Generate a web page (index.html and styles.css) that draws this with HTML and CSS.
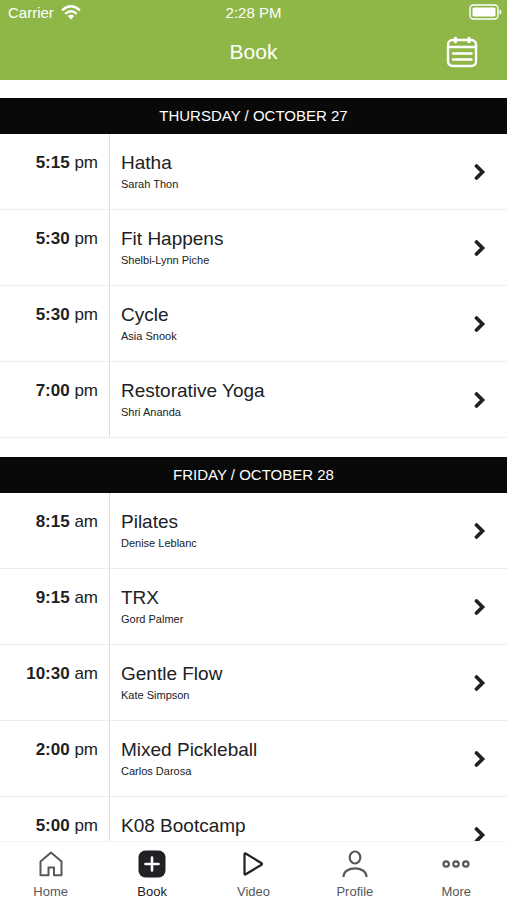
FILE: index.html
```
<!DOCTYPE html>
<html lang="en">
<head>
<meta charset="utf-8">
<meta name="viewport" content="width=device-width, initial-scale=1">
<title>Book</title>
<link rel="stylesheet" href="styles.css">
</head>
<body>
<svg class="sprite" aria-hidden="true">
  <symbol id="chevron" viewBox="0 0 12 18"><path d="M2.5 3 L8.5 9 L2.5 15" fill="none" stroke="currentColor" stroke-width="3.7" stroke-linecap="round" stroke-linejoin="miter"/></symbol>
</svg>
<header class="header">
  <div class="status">
    <div class="carrier"><span>Carrier</span>
      <svg class="wifi" viewBox="0 0 20 15" aria-hidden="true"><g fill="none" stroke="currentColor" stroke-width="2.3"><path d="M1 5.3 Q10 -2.7 19 5.3"/><path d="M4.2 8.9 Q10 3.5 15.8 8.9"/></g><path d="M6.7 11.1 Q10 8.6 13.3 11.1 L10 14.6 Z" fill="currentColor"/></svg>
    </div>
    <span>2:28 PM</span>
    <svg class="battery" viewBox="0 0 34 16" aria-hidden="true"><rect x="1" y="1" width="28" height="14" rx="3.5" fill="none" stroke="currentColor" stroke-width="1.4"/><rect x="3.500" y="3.500" width="23" height="9" rx="1.200" fill="currentColor"/><path d="M30.5 5.5 Q32.6 6.3 32.6 8 Q32.6 9.7 30.5 10.5 Z" fill="currentColor"/></svg>
  </div>
  <div class="navbar">
    <h1 class="title">Book</h1>
    <button class="calendar" type="button" aria-label="Calendar">
      <svg viewBox="0 0 32 32" aria-hidden="true"><g fill="none" stroke="currentColor" stroke-width="2.4" stroke-linecap="round"><rect x="2" y="4" width="28" height="26" rx="4.5"/><path d="M2 11 H30 M7 17.5 H25.500 M7 23.500 H25.500"/><path d="M9.500 2.500 V5.500 M23 2.500 V5.500" stroke-width="3.400"/></g></svg>
    </button>
  </div>
</header>
<main class="schedule">
  <section class="day">
    <h2 class="day-title">THURSDAY / OCTOBER 27</h2>
    <ul class="classes">
      <li><a class="class" href="#hatha"><span class="time"><b>5:15</b> pm</span><span class="info"><span class="name">Hatha</span><span class="teacher">Sarah Thon</span></span><svg class="chevron" aria-hidden="true"><use href="#chevron"/></svg></a></li>
      <li><a class="class" href="#fit"><span class="time"><b>5:30</b> pm</span><span class="info"><span class="name">Fit Happens</span><span class="teacher">Shelbi-Lynn Piche</span></span><svg class="chevron" aria-hidden="true"><use href="#chevron"/></svg></a></li>
      <li><a class="class" href="#cycle"><span class="time"><b>5:30</b> pm</span><span class="info"><span class="name">Cycle</span><span class="teacher">Asia Snook</span></span><svg class="chevron" aria-hidden="true"><use href="#chevron"/></svg></a></li>
      <li><a class="class" href="#yoga"><span class="time"><b>7:00</b> pm</span><span class="info"><span class="name">Restorative Yoga</span><span class="teacher">Shri Ananda</span></span><svg class="chevron" aria-hidden="true"><use href="#chevron"/></svg></a></li>
    </ul>
  </section>
  <section class="day">
    <h2 class="day-title">FRIDAY / OCTOBER 28</h2>
    <ul class="classes">
      <li><a class="class" href="#pilates"><span class="time"><b>8:15</b> am</span><span class="info"><span class="name">Pilates</span><span class="teacher">Denise Leblanc</span></span><svg class="chevron" aria-hidden="true"><use href="#chevron"/></svg></a></li>
      <li><a class="class" href="#trx"><span class="time"><b>9:15</b> am</span><span class="info"><span class="name">TRX</span><span class="teacher">Gord Palmer</span></span><svg class="chevron" aria-hidden="true"><use href="#chevron"/></svg></a></li>
      <li><a class="class" href="#flow"><span class="time"><b>10:30</b> am</span><span class="info"><span class="name">Gentle Flow</span><span class="teacher">Kate Simpson</span></span><svg class="chevron" aria-hidden="true"><use href="#chevron"/></svg></a></li>
      <li><a class="class" href="#pickleball"><span class="time"><b>2:00</b> pm</span><span class="info"><span class="name">Mixed Pickleball</span><span class="teacher">Carlos Darosa</span></span><svg class="chevron" aria-hidden="true"><use href="#chevron"/></svg></a></li>
      <li><a class="class" href="#bootcamp"><span class="time"><b>5:00</b> pm</span><span class="info"><span class="name">K08 Bootcamp</span></span><svg class="chevron" aria-hidden="true"><use href="#chevron"/></svg></a></li>
    </ul>
  </section>
</main>
<nav class="tabs">
  <a class="tab" href="#home"><svg viewBox="0 0 28 28" aria-hidden="true"><path d="M3.500 25.300 V11.500 L14 2.500 L24.500 11.500 V25.300 H17 V17.500 H11.500 V25.300 Z" fill="none" stroke="currentColor" stroke-width="2" stroke-linejoin="round"/></svg><span>Home</span></a>
  <a class="tab active" href="#book" aria-current="page"><svg viewBox="0 0 28 28" aria-hidden="true"><rect x=".5" y=".5" width="27" height="27" rx="7" fill="currentColor"/><path d="M14 7.500 V20.500 M7.500 14 H20.500" stroke="#fff" stroke-width="2.6" stroke-linecap="round"/></svg><span>Book</span></a>
  <a class="tab video" href="#video"><svg viewBox="0 0 28 28" aria-hidden="true"><path d="M5.500 4.200 V23.800 Q5.500 25 6.700 24.300 L22.500 14.800 Q23.500 14 22.500 13.200 L6.700 3.500 Q5.500 3 5.500 4.200 Z" fill="none" stroke="currentColor" stroke-width="2.2"/></svg><span>Video</span></a>
  <a class="tab" href="#profile"><svg viewBox="0 0 28 28" aria-hidden="true"><g fill="none" stroke="currentColor" stroke-width="2.2"><ellipse cx="14" cy="7.500" rx="5.300" ry="6"/><path d="M2.500 27 C2.500 15.500 25.500 15.500 25.500 27"/></g></svg><span>Profile</span></a>
  <a class="tab" href="#more"><svg viewBox="0 0 28 28" aria-hidden="true"><g fill="none" stroke="currentColor" stroke-width="2.2"><circle cx="4.200" cy="14" r="2.700"/><circle cx="14" cy="14" r="2.700"/><circle cx="23.800" cy="14" r="2.700"/></g></svg><span>More</span></a>
</nav>
</body>
</html>
```

FILE: styles.css
```
* { box-sizing: border-box; }

body {
  margin: 0;
  height: 100vh;
  display: flex;
  flex-direction: column;
  overflow: hidden;
  background: #fff;
  color: #202124;
  font-family: "Liberation Sans", Arial, sans-serif;
}

a { color: inherit; text-decoration: none; }

.sprite { display: none; }

.header {
  flex: none;
  background: #8eb748;
  color: #fff;
}

.status {
  display: grid;
  grid-template-columns: 1fr auto 1fr;
  align-items: center;
  height: 24px;
  padding: 0 4px;
  font-size: 15px;
}

.carrier { display: flex; align-items: center; gap: 7px; padding-left: 4px; }
.wifi { width: 20px; height: 15px; }
.battery { width: 34px; height: 16px; justify-self: end; }

.navbar {
  display: grid;
  grid-template-columns: 1fr auto 1fr;
  align-items: center;
  height: 56px;
  padding: 0 29px;
}

.title {
  grid-column: 2;
  margin: 0;
  font-size: 21px;
  font-weight: normal;
}

.calendar {
  justify-self: end;
  width: 32px;
  height: 32px;
  padding: 0;
  border: 0;
  background: none;
  color: inherit;
}
.calendar svg { display: block; }

.schedule {
  flex: 1;
  min-height: 0;
  overflow: hidden;
  padding-top: 18px;
}

.day + .day { margin-top: 19px; }

.day-title {
  margin: 0;
  background: #090909;
  color: #fff;
  font-size: 15px;
  font-weight: normal;
  line-height: 36px;
  text-align: center;
}

.classes { margin: 0; padding: 0; list-style: none; }

.class {
  display: flex;
  height: 76px;
  border-bottom: 1px solid #ebedee;
}

.time {
  flex: none;
  width: 110px;
  padding: 18px 11px 0 0;
  border-right: 1px solid #dcdfe0;
  font-size: 17px;
  line-height: 22px;
  text-align: right;
}

.info {
  flex: 1;
  display: flex;
  flex-direction: column;
  padding: 17px 0 0 11px;
}

.name { font-size: 19px; line-height: 24px; }
.teacher { font-size: 11px; line-height: 18px; }

.chevron {
  flex: none;
  align-self: center;
  width: 12px;
  height: 18px;
  margin-right: 21px;
}

.tabs {
  flex: none;
  display: grid;
  grid-template-columns: repeat(5, 1fr);
  height: 59px;
  border-top: 1px solid #f3f4f4;
  background: #fff;
}

.tab {
  display: flex;
  flex-direction: column;
  align-items: center;
  gap: 6px;
  padding-top: 8px;
  color: #55585b;
  font-size: 13px;
  line-height: 15px;
}
.tab svg { width: 28px; height: 28px; }
.tab.active { color: #202124; }
.tab.video svg { color: #202124; }
```
